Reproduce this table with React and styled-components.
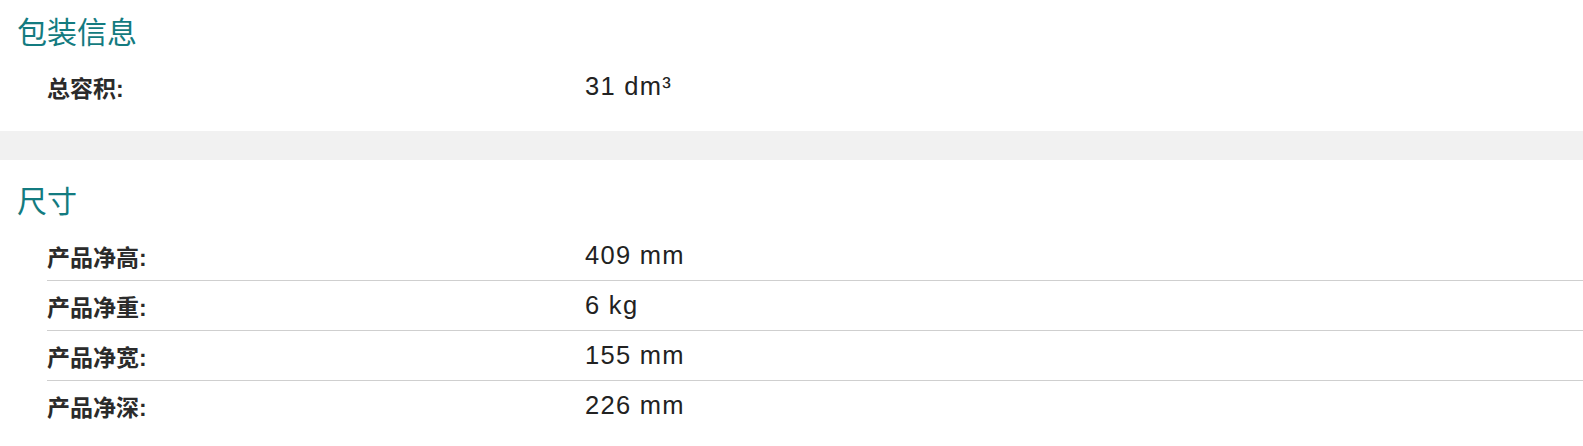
import React from 'react';
import styled, { createGlobalStyle } from 'styled-components';

const GlobalStyle = createGlobalStyle`
    body {
        margin: 0;
        background: #fff;
        font-family: "Liberation Sans", "Noto Sans CJK SC", sans-serif;
    }
`

const sections = [
    {
        title: '包装信息',
        rows: [{ label: '总容积:', value: '31 dm³' }],
    },
    {
        title: '尺寸',
        rows: [
            { label: '产品净高:', value: '409 mm' },
            { label: '产品净重:', value: '6 kg' },
            { label: '产品净宽:', value: '155 mm' },
            { label: '产品净深:', value: '226 mm' },
        ],
    },
];

const App = () => {
    return (
        <Page>
            <GlobalStyle />
            {sections.map((section, i) => (
                <React.Fragment key={section.title}>
                    {i > 0 && <Divider />}
                    <Section $first={i === 0}>
                        <Title>{section.title}</Title>
                        {section.rows.map(row => (
                            <Row key={row.label}>
                                <Label>{row.label}</Label>
                                <Value>{row.value}</Value>
                            </Row>
                        ))}
                    </Section>
                </React.Fragment>
            ))}
        </Page>
    );
};

const Page = styled.div`
    width: 100%;
`
const Section = styled.section`
    padding: ${p => p.$first ? '12px' : '21px'} 0 20px 17px;
`
const Divider = styled.div`
    height: 29px;
    background: #f1f1f1;
`
const Title = styled.h2`
    margin: 0 0 14px;
    font-family: "Noto Sans CJK SC", sans-serif;
    font-weight: 400;
    font-size: 30px;
    line-height: 36px;
    color: #137b80;
`
const Row = styled.div`
    display: grid;
    grid-template-columns: 538px 1fr;
    align-items: center;
    height: 49px;
    margin-left: 30px;
    & + & {
        border-top: 1px solid #cfcfcf;
    }
`
const Label = styled.span`
    font-family: "Liberation Sans", "Noto Sans CJK SC", sans-serif;
    font-weight: 700;
    font-size: 23px;
    color: #2b2b2b;
`
const Value = styled.span`
    font-family: "Liberation Sans", sans-serif;
    font-size: 25.5px;
    letter-spacing: 1.3px;
    color: #222;
`

export default App;
